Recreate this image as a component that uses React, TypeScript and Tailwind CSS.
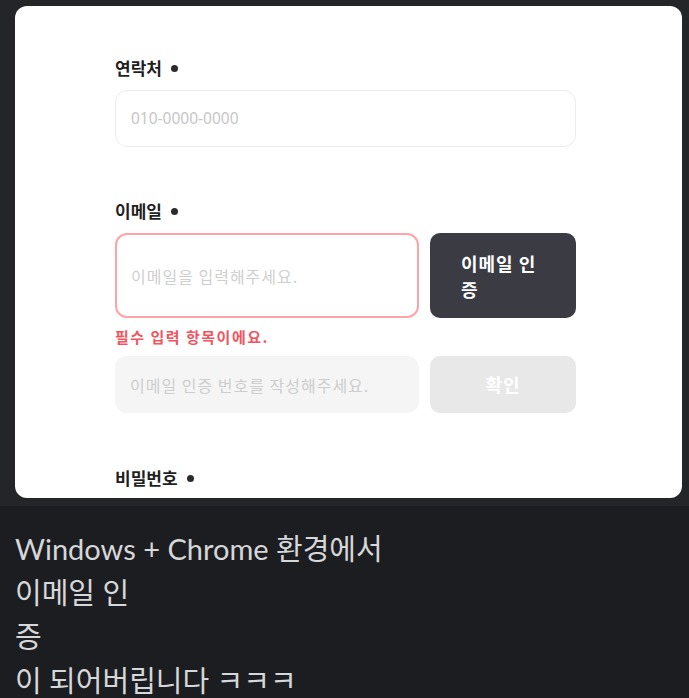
const kr = "font-['Noto_Sans_CJK_KR',sans-serif]";

const Label = ({ text }: { text: string }) => (
  <div className="flex h-6 items-center gap-[9px]">
    <span className="text-[17px] font-bold leading-6 text-[#1f1f1f]">{text}</span>
    <span className="h-[7px] w-[7px] rounded-full bg-[#2b2b2b]" />
  </div>
);

export default function App() {
  return (
    <div className={`min-h-[698px] w-[689px] bg-[#1c1d21] ${kr}`}>
      <div className="bg-[#242529] pb-[8px] pl-[15px] pr-[7px] pt-[6px]">
        <div className="h-[492px] overflow-hidden rounded-[12px] bg-white pl-[100px] pr-[106px] pt-[50px]">
          <Label text="연락처" />
          <div className="mt-[10px] flex h-[57px] items-center rounded-[12px] border border-[#ececec] px-[15px]">
            <span className="text-[15.5px] text-[#c6c6c6] font-['Noto_Sans','Noto_Sans_CJK_KR',sans-serif]">
              010-0000-0000
            </span>
          </div>

          <div className="mt-[52px]">
            <Label text="이메일" />
          </div>
          <div className="mt-[10px] flex gap-[11px]">
            <div className="flex h-[85px] flex-1 items-center rounded-[12px] border-2 border-[#ffa3a8] px-[14px]">
              <span className="text-[16px] tracking-[1px] text-[#cfcfcf]">이메일을 입력해주세요.</span>
            </div>
            <button className="flex h-[85px] w-[146px] items-center rounded-[10px] bg-[#3b3c43] pl-[31px] pr-[35px] text-left">
              <span className="text-[18px] font-bold leading-[26px] tracking-[1px] text-white">이메일 인증</span>
            </button>
          </div>
          <p className="mt-[9px] text-[15px] font-bold leading-5 tracking-[1.5px] text-[#f2545f]">
            필수 입력 항목이에요.
          </p>
          <div className="mt-[9px] flex gap-[11px]">
            <div className="flex h-[57px] flex-1 items-center rounded-[12px] bg-[#f5f5f5] px-[15px]">
              <span className="text-[16px] tracking-[1px] text-[#cdcdcd]">이메일 인증 번호를 작성해주세요.</span>
            </div>
            <button className="flex h-[57px] w-[146px] items-center justify-center rounded-[10px] bg-[#e8e8e8]">
              <span className="text-[18px] font-bold tracking-[1px] text-white">확인</span>
            </button>
          </div>

          <div className="mt-[53px]">
            <Label text="비밀번호" />
          </div>
        </div>
      </div>

      <div className="px-[15px] pt-[21px] font-['Lato','Noto_Sans_CJK_KR',sans-serif] text-[29px] leading-[44px] text-[#d6d7d8]">
        <p>Windows + Chrome 환경에서</p>
        <p>이메일 인</p>
        <p>증</p>
        <p>이 되어버립니다 ㅋㅋㅋ</p>
      </div>
    </div>
  );
}
